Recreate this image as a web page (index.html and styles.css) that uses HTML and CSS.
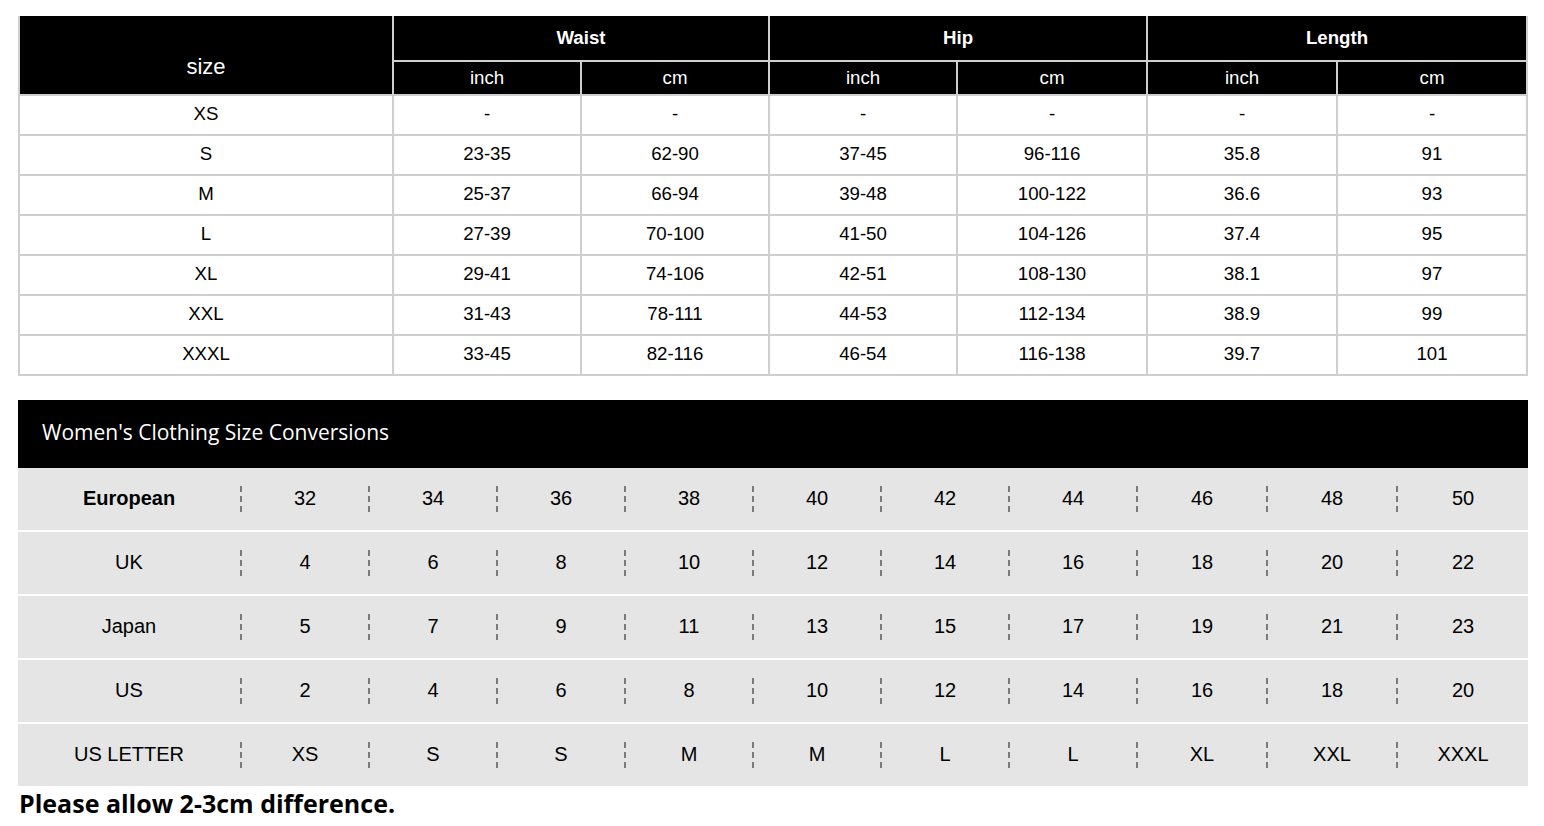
FILE: index.html
```html
<!DOCTYPE html>
<html lang="en">
<head>
<meta charset="utf-8">
<title>Size Chart</title>
<link rel="stylesheet" href="styles.css">
</head>
<body>
<main class="page">
  <div class="size-table">
    <div class="th th-size">size</div>
    <div class="th th-group">Waist</div>
    <div class="th th-group">Hip</div>
    <div class="th th-group">Length</div>
    <div class="th th-unit">inch</div>
    <div class="th th-unit">cm</div>
    <div class="th th-unit">inch</div>
    <div class="th th-unit">cm</div>
    <div class="th th-unit">inch</div>
    <div class="th th-unit">cm</div>

    <div class="td">XS</div><div class="td">-</div><div class="td">-</div><div class="td">-</div><div class="td">-</div><div class="td">-</div><div class="td">-</div>
    <div class="td">S</div><div class="td">23-35</div><div class="td">62-90</div><div class="td">37-45</div><div class="td">96-116</div><div class="td">35.8</div><div class="td">91</div>
    <div class="td">M</div><div class="td">25-37</div><div class="td">66-94</div><div class="td">39-48</div><div class="td">100-122</div><div class="td">36.6</div><div class="td">93</div>
    <div class="td">L</div><div class="td">27-39</div><div class="td">70-100</div><div class="td">41-50</div><div class="td">104-126</div><div class="td">37.4</div><div class="td">95</div>
    <div class="td">XL</div><div class="td">29-41</div><div class="td">74-106</div><div class="td">42-51</div><div class="td">108-130</div><div class="td">38.1</div><div class="td">97</div>
    <div class="td">XXL</div><div class="td">31-43</div><div class="td">78-111</div><div class="td">44-53</div><div class="td">112-134</div><div class="td">38.9</div><div class="td">99</div>
    <div class="td">XXXL</div><div class="td">33-45</div><div class="td">82-116</div><div class="td">46-54</div><div class="td">116-138</div><div class="td">39.7</div><div class="td">101</div>
  </div>

  <section class="conv">
    <div class="conv-title">Women's Clothing Size Conversions</div>
    <div class="conv-rows">
      <div class="conv-row">
        <div class="conv-label conv-label-bold">European</div>
        <div class="conv-cell"><span class="dash"></span><span class="val">32</span></div>
        <div class="conv-cell"><span class="dash"></span><span class="val">34</span></div>
        <div class="conv-cell"><span class="dash"></span><span class="val">36</span></div>
        <div class="conv-cell"><span class="dash"></span><span class="val">38</span></div>
        <div class="conv-cell"><span class="dash"></span><span class="val">40</span></div>
        <div class="conv-cell"><span class="dash"></span><span class="val">42</span></div>
        <div class="conv-cell"><span class="dash"></span><span class="val">44</span></div>
        <div class="conv-cell"><span class="dash"></span><span class="val">46</span></div>
        <div class="conv-cell"><span class="dash"></span><span class="val">48</span></div>
        <div class="conv-cell"><span class="dash"></span><span class="val">50</span></div>
      </div>
      <div class="conv-row">
        <div class="conv-label">UK</div>
        <div class="conv-cell"><span class="dash"></span><span class="val">4</span></div>
        <div class="conv-cell"><span class="dash"></span><span class="val">6</span></div>
        <div class="conv-cell"><span class="dash"></span><span class="val">8</span></div>
        <div class="conv-cell"><span class="dash"></span><span class="val">10</span></div>
        <div class="conv-cell"><span class="dash"></span><span class="val">12</span></div>
        <div class="conv-cell"><span class="dash"></span><span class="val">14</span></div>
        <div class="conv-cell"><span class="dash"></span><span class="val">16</span></div>
        <div class="conv-cell"><span class="dash"></span><span class="val">18</span></div>
        <div class="conv-cell"><span class="dash"></span><span class="val">20</span></div>
        <div class="conv-cell"><span class="dash"></span><span class="val">22</span></div>
      </div>
      <div class="conv-row">
        <div class="conv-label">Japan</div>
        <div class="conv-cell"><span class="dash"></span><span class="val">5</span></div>
        <div class="conv-cell"><span class="dash"></span><span class="val">7</span></div>
        <div class="conv-cell"><span class="dash"></span><span class="val">9</span></div>
        <div class="conv-cell"><span class="dash"></span><span class="val">11</span></div>
        <div class="conv-cell"><span class="dash"></span><span class="val">13</span></div>
        <div class="conv-cell"><span class="dash"></span><span class="val">15</span></div>
        <div class="conv-cell"><span class="dash"></span><span class="val">17</span></div>
        <div class="conv-cell"><span class="dash"></span><span class="val">19</span></div>
        <div class="conv-cell"><span class="dash"></span><span class="val">21</span></div>
        <div class="conv-cell"><span class="dash"></span><span class="val">23</span></div>
      </div>
      <div class="conv-row">
        <div class="conv-label">US</div>
        <div class="conv-cell"><span class="dash"></span><span class="val">2</span></div>
        <div class="conv-cell"><span class="dash"></span><span class="val">4</span></div>
        <div class="conv-cell"><span class="dash"></span><span class="val">6</span></div>
        <div class="conv-cell"><span class="dash"></span><span class="val">8</span></div>
        <div class="conv-cell"><span class="dash"></span><span class="val">10</span></div>
        <div class="conv-cell"><span class="dash"></span><span class="val">12</span></div>
        <div class="conv-cell"><span class="dash"></span><span class="val">14</span></div>
        <div class="conv-cell"><span class="dash"></span><span class="val">16</span></div>
        <div class="conv-cell"><span class="dash"></span><span class="val">18</span></div>
        <div class="conv-cell"><span class="dash"></span><span class="val">20</span></div>
      </div>
      <div class="conv-row">
        <div class="conv-label">US LETTER</div>
        <div class="conv-cell"><span class="dash"></span><span class="val">XS</span></div>
        <div class="conv-cell"><span class="dash"></span><span class="val">S</span></div>
        <div class="conv-cell"><span class="dash"></span><span class="val">S</span></div>
        <div class="conv-cell"><span class="dash"></span><span class="val">M</span></div>
        <div class="conv-cell"><span class="dash"></span><span class="val">M</span></div>
        <div class="conv-cell"><span class="dash"></span><span class="val">L</span></div>
        <div class="conv-cell"><span class="dash"></span><span class="val">L</span></div>
        <div class="conv-cell"><span class="dash"></span><span class="val">XL</span></div>
        <div class="conv-cell"><span class="dash"></span><span class="val">XXL</span></div>
        <div class="conv-cell"><span class="dash"></span><span class="val">XXXL</span></div>
      </div>
    </div>
  </section>

  <p class="note">Please allow 2-3cm difference.</p>
</main>
</body>
</html>
```

FILE: styles.css
```css
html, body {
  margin: 0;
  padding: 0;
  background: #fff;
}

.page {
  padding: 16px 16px 0 18px;
  width: 1510px;
}

/* ---------- top size table ---------- */
.size-table {
  display: grid;
  grid-template-columns: 372px 186px 186px 186px 188px 188px 188px;
  grid-template-rows: 44px 32px repeat(7, 38px);
  gap: 2px;
  padding: 0 2px 2px 2px;
  background: #cfcfcf;
  font-family: "Liberation Sans", Arial, sans-serif;
  font-size: 18.67px;
  color: #000;
}

.th {
  background: #000;
  color: #fff;
  display: flex;
  align-items: center;
  justify-content: center;
}

.th-size {
  grid-row: 1 / span 2;
  font-size: 22px;
  padding-top: 24px;
}

.th-group {
  grid-column: span 2;
  font-weight: bold;
}

.td {
  background: #fff;
  display: flex;
  align-items: center;
  justify-content: center;
  padding-bottom: 3px;
}

/* ---------- conversions ---------- */
.conv {
  margin-top: 24px;
}

.conv-title {
  height: 68px;
  background: #000;
  color: #fff;
  font-family: "Open Sans", sans-serif;
  font-size: 21px;
  display: flex;
  align-items: center;
  padding: 0 0 4px 24px;
  box-sizing: border-box;
}

.conv-rows {
  display: flex;
  flex-direction: column;
  gap: 2px;
}

.conv-row {
  display: grid;
  grid-template-columns: 222px repeat(7, 128px) 130px 130px 1fr;
  height: 62px;
  background: #e5e5e5;
  font-family: "Liberation Sans", Arial, sans-serif;
  font-size: 20px;
  color: #000;
}

.conv-label {
  display: flex;
  align-items: center;
  justify-content: center;
  padding-bottom: 1px;
}

.conv-label-bold {
  font-weight: bold;
}

.conv-cell {
  display: flex;
  align-items: center;
}

.dash {
  width: 2px;
  height: 26px;
  flex: none;
  background: repeating-linear-gradient(to bottom, #7a7a7a 0, #7a7a7a 6px, transparent 6px, transparent 10px);
}

.val {
  flex: 1;
  text-align: center;
  padding-bottom: 1px;
}

.note {
  margin: 0 0 0 1px;
  font-family: "Open Sans", sans-serif;
  font-weight: bold;
  font-size: 25px;
  line-height: 34px;
  color: #000;
}
```
